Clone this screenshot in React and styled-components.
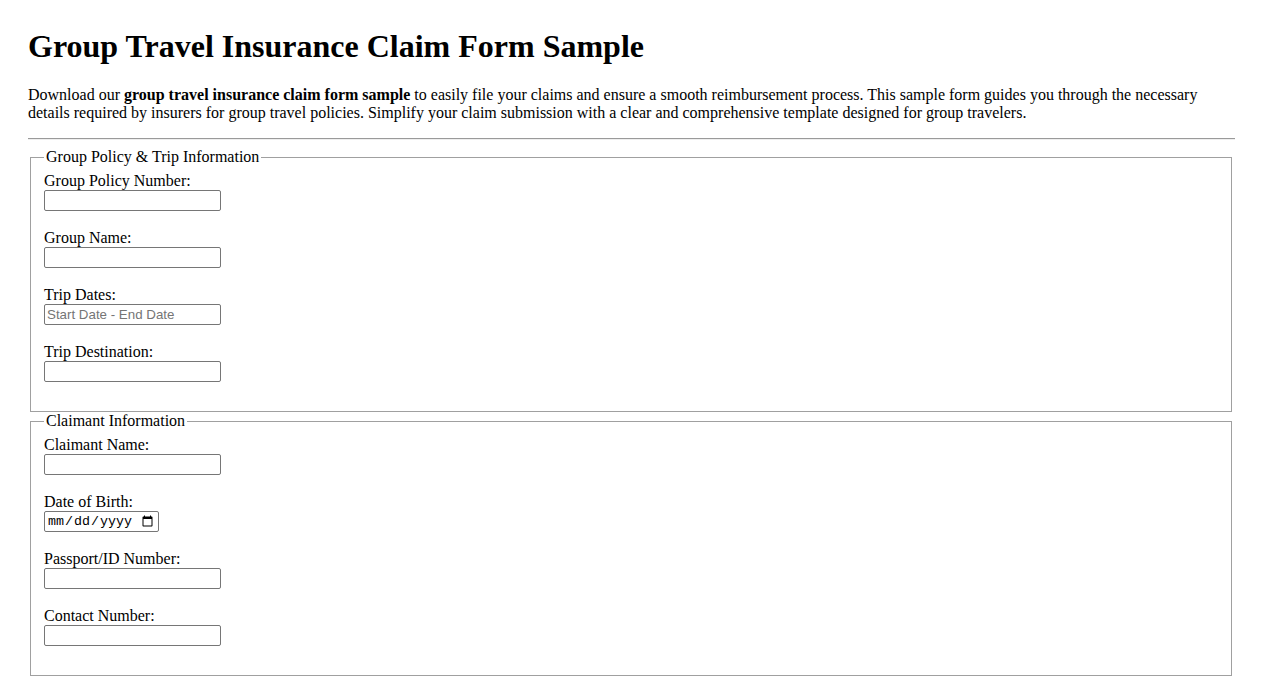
import styled, { createGlobalStyle } from "styled-components";

const Global = createGlobalStyle`
    html, body {
        margin: 0;
        padding: 0;
        background: #fff;
    }
    body {
        font-family: "Liberation Serif", "Times New Roman", serif;
        font-size: 16px;
        color: #000;
    }
`

const Page = styled.main`
    padding: 28px 28px 20px 28px;
`
const Title = styled.h1`
    font-size: 32px;
    font-weight: bold;
    margin: 0 0 21px 0;
    line-height: 37px;
`
const Intro = styled.p`
    margin: 0;
    line-height: 18px;
`
const Rule = styled.hr`
    margin: 16px 0 8px 0;
    border: none;
    border-top: 1px solid #9a9a9a;
    height: 1px;
    background: #eee;
`
const Fieldset = styled.fieldset`
    margin: 0 3px 0 2px;
    padding: 6px 12px 11px 13px;
    border: 1px solid #a0a0a0;
    display: flex;
    flex-direction: column;
`
const Legend = styled.legend`
    padding: 0 2px;
    line-height: 18px;
`
const Field = styled.div`
    display: flex;
    flex-direction: column;
    align-items: flex-start;
    margin-bottom: 18px;
`
const Label = styled.label`
    line-height: 18px;
`
const Input = styled.input`
    box-sizing: border-box;
    width: ${p => p.$w || 177}px;
    height: 21px;
    margin: 0;
    padding: 1px 2px;
    border: 1px solid #767676;
    border-radius: 2px;
    font-family: ${p => p.$mono ? '"Liberation Mono", monospace' : '"Liberation Sans", Arial, sans-serif'};
    font-size: 13.33px;
    color: #000;
    background: #fff;
    &::placeholder {
        color: #757575;
    }
`

const groupFields = [
    { id: "policy", label: "Group Policy Number:" },
    { id: "group", label: "Group Name:" },
    { id: "dates", label: "Trip Dates:", placeholder: "Start Date - End Date" },
    { id: "dest", label: "Trip Destination:" },
]

const claimantFields = [
    { id: "name", label: "Claimant Name:" },
    { id: "dob", label: "Date of Birth:", type: "date" },
    { id: "passport", label: "Passport/ID Number:" },
    { id: "phone", label: "Contact Number:" },
]

const Fields = ({ items }) => items.map(f => (
    <Field key={f.id}>
        <Label htmlFor={f.id}>{f.label}</Label>
        {f.type === "date"
            ? <Input id={f.id} type="date" $w={115} $mono />
            : <Input id={f.id} type="text" placeholder={f.placeholder} />}
    </Field>
))

const App = () => {
    return (
        <Page>
            <Global />
            <Title>Group Travel Insurance Claim Form Sample</Title>
            <Intro>
                Download our <b>group travel insurance claim form sample</b> to easily file your claims and ensure a smooth reimbursement process. This sample form guides you through the necessary details required by insurers for group travel policies. Simplify your claim submission with a clear and comprehensive template designed for group travelers.
            </Intro>
            <Rule />
            <form>
                <Fieldset>
                    <Legend>Group Policy &amp; Trip Information</Legend>
                    <Fields items={groupFields} />
                </Fieldset>
                <Fieldset>
                    <Legend>Claimant Information</Legend>
                    <Fields items={claimantFields} />
                </Fieldset>
            </form>
        </Page>
    );
}

export default App;
